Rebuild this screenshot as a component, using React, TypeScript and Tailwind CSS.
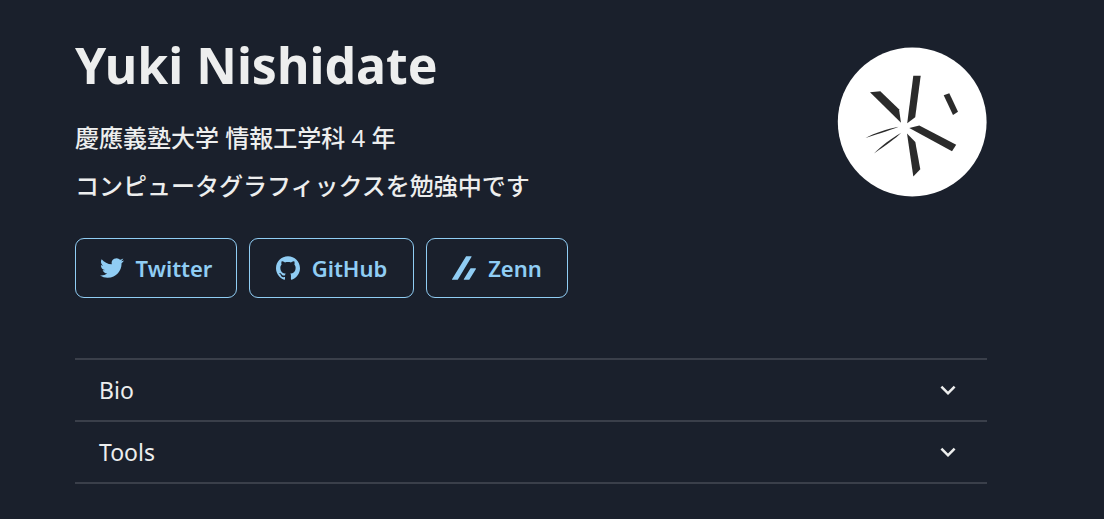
import { SiGithub, SiZenn } from "react-icons/si";
import type { ReactNode } from "react";

function TwitterIcon() {
  return (
    <svg viewBox="0 0 24 24" fill="currentColor" className="size-6" aria-hidden="true">
      <path d="M23.953 4.57a10 10 0 01-2.825.775 4.958 4.958 0 002.163-2.723c-.951.555-2.005.959-3.127 1.184a4.92 4.92 0 00-8.384 4.482C7.69 8.095 4.067 6.13 1.64 3.162a4.822 4.822 0 00-.666 2.475c0 1.71.87 3.213 2.188 4.096a4.904 4.904 0 01-2.228-.616v.06a4.923 4.923 0 003.946 4.827 4.996 4.996 0 01-2.212.085 4.936 4.936 0 004.604 3.417 9.867 9.867 0 01-6.102 2.105c-.39 0-.779-.023-1.17-.067a13.995 13.995 0 007.557 2.209c9.053 0 13.998-7.496 13.998-13.985 0-.21 0-.42-.015-.63A9.935 9.935 0 0024 4.59z" />
    </svg>
  );
}

function Avatar() {
  return (
    <svg viewBox="7 7 150 150" className="mt-[9px] size-[150px] shrink-0" role="img" aria-label="Yuki Nishidate">
      <circle cx="82.2" cy="82" r="74.4" fill="#fff" />
      <g fill="#2b2b2b">
        <path d="M83.3 35.7H90.7L85.2 77.3L77.2 83.3Z" />
        <path d="M40 52.2L50.3 51.2L69 69.3L71 82.7Z" />
        <path d="M113.7 55.3L119.3 53.3L128 71.7L123 75Z" />
        <path d="M79.3 88L89.3 85.5L126.2 104.7L122 111.3Z" />
        <path d="M77 93.5L85.3 102L90.3 129.3L83.3 136.5Z" />
        <path d="M35.5 98C44 93.5 57 89 68.5 86.8C64 89 50 93.5 35.5 98Z" />
        <path d="M44 113.5C51 106.5 61 98.5 71.3 92.8C66 98 55 106 44 113.5Z" />
      </g>
    </svg>
  );
}

type SocialLinkProps = { href: string; icon: ReactNode; width: string; children: ReactNode };

function SocialLink({ href, icon, width, children }: SocialLinkProps) {
  return (
    <a
      href={href}
      className={`${width} flex h-15 items-center justify-center gap-3 rounded-[9px] border border-[#90cdf4] text-[22px] font-semibold text-[#90cdf4]`}
    >
      {icon}
      {children}
    </a>
  );
}

function AccordionRow({ title }: { title: string }) {
  return (
    <button
      type="button"
      aria-expanded="false"
      className="flex w-full items-center justify-between border-t-2 border-[#3a3f4a] px-6 py-3 text-left text-[23px] leading-9"
    >
      {title}
      <svg viewBox="0 0 24 24" fill="currentColor" className="size-[30px]" aria-hidden="true">
        <path d="M16.59 8.59L12 13.17 7.41 8.59 6 10l6 6 6-6z" />
      </svg>
    </button>
  );
}

export default function App() {
  return (
    <main className="min-h-screen bg-[#1a202c] pr-[117px] pl-[75px] pt-[38px] font-['Noto_Sans','Noto_Sans_CJK_JP',sans-serif] text-[#edeeee]">
      <header className="flex items-start justify-between">
        <div>
          <h1 className="text-[50px] leading-[54px] font-bold">Yuki Nishidate</h1>
          <div className="pt-[22px] text-2xl leading-[48px] font-medium">
            <p>
              慶應義塾大学 情報工学科 <span className="font-normal">4</span> 年
            </p>
            <p>コンピュータグラフィックスを勉強中です</p>
          </div>
          <nav className="flex gap-3 pt-7">
            <SocialLink href="#twitter" width="w-[162px]" icon={<TwitterIcon />}>Twitter</SocialLink>
            <SocialLink href="#github" width="w-[165px]" icon={<SiGithub className="size-6" />}>GitHub</SocialLink>
            <SocialLink href="#zenn" width="w-[142px]" icon={<SiZenn className="size-6" />}>Zenn</SocialLink>
          </nav>
        </div>
        <Avatar />
      </header>
      <section className="mt-15 border-b-2 border-[#3a3f4a]">
        <AccordionRow title="Bio" />
        <AccordionRow title="Tools" />
      </section>
    </main>
  );
}
